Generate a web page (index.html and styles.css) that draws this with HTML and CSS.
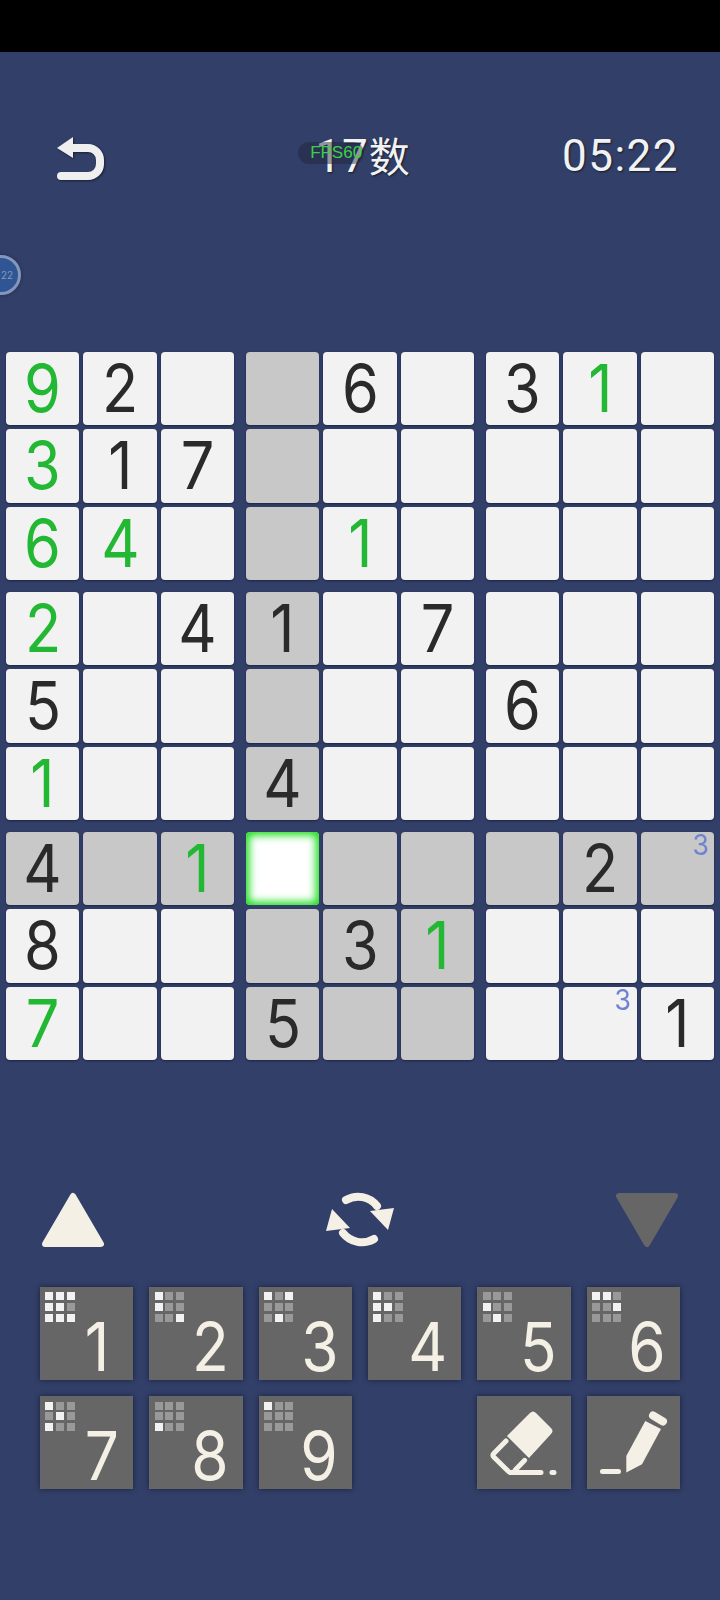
FILE: index.html
```html
<!DOCTYPE html>
<html lang="zh">
<head>
  <meta charset="UTF-8">
  <meta name="viewport" content="width=device-width, initial-scale=1.0">
  <title>Sudoku</title>
  <link rel="stylesheet" href="styles.css">
</head>
<body>

<div class="status-bar"></div>

<header class="top-bar">
  <svg class="back-icon" width="50" height="46" viewBox="0 0 50 46">
    <path class="back-head" d="M1 12 L17 1 V22 Z"/>
    <path class="back-line" d="M14 12 H32 A12 12 0 0 1 44 24 V28 A12 12 0 0 1 32 40 H5"/>
  </svg>
  <div class="title">
    <span class="title-num">17</span><span class="title-han">数</span>
    <span class="fps">FPS60</span>
  </div>
  <div class="timer">05:22</div>
</header>

<div class="side-badge"><span>22</span></div>

<main class="board">
  <div class="box">
    <div class="cell green"><b>9</b></div>
    <div class="cell"><b>2</b></div>
    <div class="cell"></div>
    <div class="cell green"><b>3</b></div>
    <div class="cell"><b>1</b></div>
    <div class="cell"><b>7</b></div>
    <div class="cell green"><b>6</b></div>
    <div class="cell green"><b>4</b></div>
    <div class="cell"></div>
  </div>
  <div class="box">
    <div class="cell hl"></div>
    <div class="cell"><b>6</b></div>
    <div class="cell"></div>
    <div class="cell hl"></div>
    <div class="cell"></div>
    <div class="cell"></div>
    <div class="cell hl"></div>
    <div class="cell green"><b>1</b></div>
    <div class="cell"></div>
  </div>
  <div class="box">
    <div class="cell"><b>3</b></div>
    <div class="cell green"><b>1</b></div>
    <div class="cell"></div>
    <div class="cell"></div>
    <div class="cell"></div>
    <div class="cell"></div>
    <div class="cell"></div>
    <div class="cell"></div>
    <div class="cell"></div>
  </div>

  <div class="box">
    <div class="cell green"><b>2</b></div>
    <div class="cell"></div>
    <div class="cell"><b>4</b></div>
    <div class="cell"><b>5</b></div>
    <div class="cell"></div>
    <div class="cell"></div>
    <div class="cell green"><b>1</b></div>
    <div class="cell"></div>
    <div class="cell"></div>
  </div>
  <div class="box">
    <div class="cell hl"><b>1</b></div>
    <div class="cell"></div>
    <div class="cell"><b>7</b></div>
    <div class="cell hl"></div>
    <div class="cell"></div>
    <div class="cell"></div>
    <div class="cell hl"><b>4</b></div>
    <div class="cell"></div>
    <div class="cell"></div>
  </div>
  <div class="box">
    <div class="cell"></div>
    <div class="cell"></div>
    <div class="cell"></div>
    <div class="cell"><b>6</b></div>
    <div class="cell"></div>
    <div class="cell"></div>
    <div class="cell"></div>
    <div class="cell"></div>
    <div class="cell"></div>
  </div>

  <div class="box">
    <div class="cell hl"><b>4</b></div>
    <div class="cell hl"></div>
    <div class="cell hl green"><b>1</b></div>
    <div class="cell"><b>8</b></div>
    <div class="cell"></div>
    <div class="cell"></div>
    <div class="cell green"><b>7</b></div>
    <div class="cell"></div>
    <div class="cell"></div>
  </div>
  <div class="box">
    <div class="cell selected"></div>
    <div class="cell hl"></div>
    <div class="cell hl"></div>
    <div class="cell hl"></div>
    <div class="cell hl"><b>3</b></div>
    <div class="cell hl green"><b>1</b></div>
    <div class="cell hl"><b>5</b></div>
    <div class="cell hl"></div>
    <div class="cell hl"></div>
  </div>
  <div class="box">
    <div class="cell hl"></div>
    <div class="cell hl"><b>2</b></div>
    <div class="cell hl"><span class="note">3</span></div>
    <div class="cell"></div>
    <div class="cell"></div>
    <div class="cell"></div>
    <div class="cell"></div>
    <div class="cell"><span class="note">3</span></div>
    <div class="cell"><b>1</b></div>
  </div>
</main>

<section class="tools">
  <svg width="64" height="56" viewBox="0 0 64 56">
    <path class="tri-up" d="M32 4 L60 52 H4 Z"/>
  </svg>
  <svg width="70" height="58" viewBox="0 0 70 58">
    <path class="swap-arc" d="M21 9 A24 24 0 0 1 52 15"/>
    <path class="swap-head" d="M45 20 L69 17 L63 39 Z"/>
    <g transform="rotate(180 35 28.5)">
      <path class="swap-arc" d="M21 9 A24 24 0 0 1 52 15"/>
      <path class="swap-head" d="M45 20 L69 17 L63 39 Z"/>
    </g>
  </svg>
  <svg width="64" height="56" viewBox="0 0 64 56">
    <path class="tri-down" d="M4 4 H60 L32 52 Z"/>
  </svg>
</section>

<section class="pad">
  <div class="key">
    <div class="mini"><i class="on"></i><i class="on"></i><i class="on"></i><i class="on"></i><i class="on"></i><i></i><i class="on"></i><i class="on"></i><i class="on"></i></div>
    <span class="key-num one">1</span>
  </div>
  <div class="key">
    <div class="mini"><i class="on"></i><i></i><i></i><i class="on"></i><i></i><i></i><i></i><i></i><i class="on"></i></div>
    <span class="key-num">2</span>
  </div>
  <div class="key">
    <div class="mini"><i class="on"></i><i></i><i class="on"></i><i></i><i></i><i></i><i></i><i class="on"></i><i></i></div>
    <span class="key-num">3</span>
  </div>
  <div class="key">
    <div class="mini"><i class="on"></i><i></i><i></i><i class="on"></i><i class="on"></i><i></i><i class="on"></i><i></i><i></i></div>
    <span class="key-num">4</span>
  </div>
  <div class="key">
    <div class="mini"><i></i><i></i><i></i><i class="on"></i><i></i><i></i><i></i><i class="on"></i><i></i></div>
    <span class="key-num">5</span>
  </div>
  <div class="key">
    <div class="mini"><i class="on"></i><i class="on"></i><i></i><i></i><i></i><i class="on"></i><i></i><i></i><i></i></div>
    <span class="key-num">6</span>
  </div>
  <div class="key">
    <div class="mini"><i class="on"></i><i></i><i></i><i></i><i class="on"></i><i></i><i class="on"></i><i></i><i></i></div>
    <span class="key-num">7</span>
  </div>
  <div class="key">
    <div class="mini"><i></i><i></i><i></i><i></i><i></i><i></i><i class="on"></i><i></i><i></i></div>
    <span class="key-num">8</span>
  </div>
  <div class="key">
    <div class="mini"><i class="on"></i><i></i><i></i><i></i><i></i><i></i><i></i><i></i><i></i></div>
    <span class="key-num">9</span>
  </div>
  <div class="key-gap"></div>
  <div class="key">
    <svg class="key-icon" viewBox="0 0 93.33 93.33">
      <path class="ico-fill" d="M53 17 Q56 14 59 17 L74 32 Q77 35 74 38 L52 62 L30 40 Z"/>
      <path class="ico-line" d="M29 45 L17 57.2 Q15 59.2 17 61.2 L31 75 Q32 76.6 34 76.6 H64"/>
      <path class="ico-line" d="M47.7 64.3 L38 74.3"/>
      <path class="ico-line" d="M75 76.6 H77"/>
    </svg>
  </div>
  <div class="key">
    <svg class="key-icon" viewBox="0 0 93.33 93.33">
      <path class="ico-cap" d="M66 19.5 L76 25.5"/>
      <path class="ico-fill" d="M58.3 25 L74 33 L55 68.3 L39.3 76.6 V60 Z"/>
      <path class="ico-line" d="M15.5 75.5 H31.5"/>
    </svg>
  </div>
</section>

</body>
</html>
```

FILE: styles.css
```css
* {
  box-sizing: border-box;
  margin: 0;
  padding: 0;
}

html, body {
  width: 720px;
  height: 1600px;
  overflow: hidden;
}

body {
  background: #323f68;
  font-family: Inter, sans-serif;
  position: relative;
}

.status-bar {
  height: 52px;
  background: #000;
}

.top-bar {
  height: 78px;
  margin-top: 78px;
  padding: 0 41px 0 56px;
  display: grid;
  grid-template-columns: 1fr auto 1fr;
  align-items: start;
  color: #f2f2f2;
  font-family: Roboto, sans-serif;
}

.back-icon {
  margin-top: 6px;
  filter: drop-shadow(1px 1px 1px rgba(0, 0, 0, 0.5));
}

.back-head {
  fill: #efefef;
}

.back-line {
  fill: none;
  stroke: #efefef;
  stroke-width: 8;
  stroke-linecap: round;
}

.title {
  position: relative;
  left: -5px;
  line-height: 52px;
  font-family: Roboto, "Noto Sans CJK SC", sans-serif;
  text-shadow: 1px 1px 2px rgba(0, 0, 0, 0.6);
  white-space: nowrap;
}

.title-num {
  font-size: 46px;
  font-weight: 400;
  letter-spacing: 1px;
}

.title-han {
  font-size: 41px;
  font-weight: 400;
}

.fps {
  position: absolute;
  left: -17px;
  top: 12px;
  padding: 0 2px 0 12px;
  height: 22px;
  line-height: 22px;
  border-radius: 11px;
  background: rgba(30, 36, 56, 0.45);
  color: #3ecf4a;
  font-family: "Liberation Sans", sans-serif;
  font-size: 17px;
  font-weight: 400;
  text-shadow: none;
}

.timer {
  justify-self: end;
  font-size: 44px;
  font-weight: 400;
  letter-spacing: 1.5px;
  line-height: 52px;
  text-shadow: 1px 1px 2px rgba(0, 0, 0, 0.6);
}

.side-badge {
  position: absolute;
  left: -19px;
  top: 255px;
  width: 40px;
  height: 40px;
  padding-left: 17px;
  border-radius: 50%;
  background: #2f5592;
  border: 3px solid #8496bd;
  box-shadow: 0 0 4px rgba(0, 0, 0, 0.3);
  color: #8496bd;
  font-size: 10px;
  line-height: 34px;
}

.board {
  margin: 144px 6px 0;
  display: grid;
  grid-template-columns: repeat(3, 1fr);
  gap: 12px;
}

.box {
  display: grid;
  grid-template-columns: repeat(3, 73.33px);
  grid-auto-rows: 73.33px;
  gap: 4px;
}

.cell {
  position: relative;
  background: #f2f2f2;
  border-radius: 4px;
  box-shadow: 0 1px 2px rgba(20, 25, 50, 0.7);
  color: #2a2a2a;
  font-size: 66px;
  line-height: 73px;
  text-align: center;
}

.cell b {
  display: inline-block;
  font-weight: 400;
  transform: scaleX(0.9);
}

.hl {
  background: #c8c8c8;
}

.green {
  color: #22b833;
}

.selected {
  background: #fff;
  box-shadow: inset 0 0 8px 3px #10dc10;
}

.note {
  position: absolute;
  top: 1px;
  right: 5px;
  color: #6f83d2;
  font-size: 28px;
  line-height: 25px;
  display: inline-block;
  transform: scaleX(0.95);
}

.tools {
  margin-top: 130px;
  padding: 0 41px;
  height: 60px;
  display: flex;
  justify-content: space-between;
  align-items: center;
}

.tri-up {
  fill: #f5f0e6;
  stroke: #f5f0e6;
  stroke-width: 6;
  stroke-linejoin: round;
}

.tri-down {
  fill: #666;
  stroke: #666;
  stroke-width: 6;
  stroke-linejoin: round;
}

.swap-arc {
  fill: none;
  stroke: #f5f0e6;
  stroke-width: 8;
  stroke-linecap: round;
}

.swap-head {
  fill: #f5f0e6;
}

.pad {
  margin-top: 36.7px;
  padding: 0 40px;
  display: grid;
  grid-template-columns: repeat(6, 93.33px);
  grid-auto-rows: 93.33px;
  gap: 16px;
}

.key {
  position: relative;
  background: #666;
  box-shadow: 0 0 5px rgba(20, 25, 50, 0.8);
}

.mini {
  position: absolute;
  left: 5.3px;
  top: 5.6px;
  display: grid;
  grid-template-columns: repeat(3, 8px);
  grid-auto-rows: 8px;
  gap: 2.67px;
}

.mini i {
  background: #999;
}

.mini i.on {
  background: #f2f2f2;
}

.key-num {
  position: absolute;
  right: 14px;
  bottom: 0;
  color: #f5f0e6;
  font-size: 67px;
  font-weight: 400;
  line-height: 66px;
  transform: scaleX(0.9);
  transform-origin: right;
}

.key-num.one {
  right: 24px;
}

.key-icon {
  display: block;
  width: 100%;
  height: 100%;
}

.ico-fill {
  fill: #f5f0e6;
}

.ico-line {
  fill: none;
  stroke: #f5f0e6;
  stroke-width: 5;
  stroke-linecap: round;
  stroke-linejoin: round;
}

.ico-cap {
  fill: none;
  stroke: #f5f0e6;
  stroke-width: 8;
  stroke-linecap: round;
}
```
